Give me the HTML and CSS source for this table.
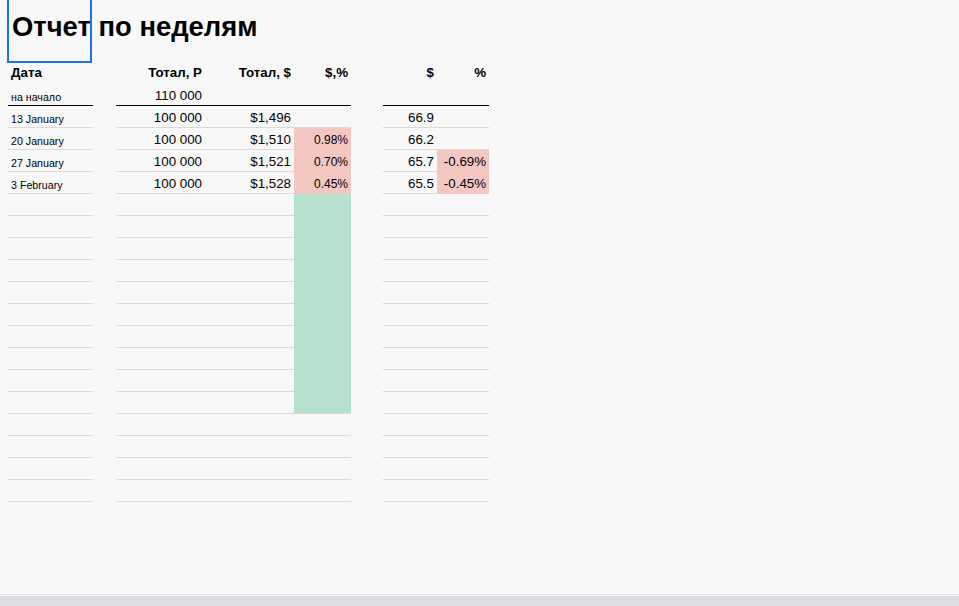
FILE: index.html
```html
<!DOCTYPE html>
<html lang="ru">
<head>
<meta charset="utf-8">
<title>Отчет по неделям</title>
<link rel="stylesheet" href="styles.css">
</head>
<body>
<main class="sheet">
  <table class="grid">
    <colgroup>
      <col class="c-date">
      <col class="c-gap1">
      <col class="c-rub">
      <col class="c-usd">
      <col class="c-pct">
      <col class="c-gap2">
      <col class="c-rate">
      <col class="c-rpct">
    </colgroup>
    <tbody>
      <tr class="r-title">
        <td class="title" colspan="8"><span class="sel"></span>Отчет по неделям</td>
      </tr>
      <tr class="r-head">
        <td class="l">Дата</td><td class="sp"></td><td>Тотал, Р</td><td>Тотал, $</td><td>$,%</td><td class="sp"></td><td>$</td><td>%</td>
      </tr>
      <tr class="r-start">
        <td class="l small">на начало</td><td class="sp"></td><td>110 000</td><td></td><td></td><td class="sp"></td><td></td><td></td>
      </tr>
      <tr>
        <td class="l small">13 January</td><td class="sp"></td><td>100 000</td><td>$1,496</td><td class="mid"></td><td class="sp"></td><td>66.9</td><td></td>
      </tr>
      <tr>
        <td class="l small">20 January</td><td class="sp"></td><td>100 000</td><td>$1,510</td><td class="mid pink">0.98%</td><td class="sp"></td><td>66.2</td><td></td>
      </tr>
      <tr>
        <td class="l small">27 January</td><td class="sp"></td><td>100 000</td><td>$1,521</td><td class="mid pink">0.70%</td><td class="sp"></td><td>65.7</td><td class="pink">-0.69%</td>
      </tr>
      <tr>
        <td class="l small">3 February</td><td class="sp"></td><td>100 000</td><td>$1,528</td><td class="mid pink">0.45%</td><td class="sp"></td><td>65.5</td><td class="pink">-0.45%</td>
      </tr>
      <tr><td></td><td class="sp"></td><td></td><td></td><td class="green"></td><td class="sp"></td><td></td><td></td></tr>
      <tr><td></td><td class="sp"></td><td></td><td></td><td class="green"></td><td class="sp"></td><td></td><td></td></tr>
      <tr><td></td><td class="sp"></td><td></td><td></td><td class="green"></td><td class="sp"></td><td></td><td></td></tr>
      <tr><td></td><td class="sp"></td><td></td><td></td><td class="green"></td><td class="sp"></td><td></td><td></td></tr>
      <tr><td></td><td class="sp"></td><td></td><td></td><td class="green"></td><td class="sp"></td><td></td><td></td></tr>
      <tr><td></td><td class="sp"></td><td></td><td></td><td class="green"></td><td class="sp"></td><td></td><td></td></tr>
      <tr><td></td><td class="sp"></td><td></td><td></td><td class="green"></td><td class="sp"></td><td></td><td></td></tr>
      <tr><td></td><td class="sp"></td><td></td><td></td><td class="green"></td><td class="sp"></td><td></td><td></td></tr>
      <tr><td></td><td class="sp"></td><td></td><td></td><td class="green"></td><td class="sp"></td><td></td><td></td></tr>
      <tr><td></td><td class="sp"></td><td></td><td></td><td class="green last"></td><td class="sp"></td><td></td><td></td></tr>
      <tr><td></td><td class="sp"></td><td></td><td></td><td></td><td class="sp"></td><td></td><td></td></tr>
      <tr><td></td><td class="sp"></td><td></td><td></td><td></td><td class="sp"></td><td></td><td></td></tr>
      <tr><td></td><td class="sp"></td><td></td><td></td><td></td><td class="sp"></td><td></td><td></td></tr>
      <tr><td></td><td class="sp"></td><td></td><td></td><td></td><td class="sp"></td><td></td><td></td></tr>
    </tbody>
  </table>
</main>
<footer class="footer"><div class="footer-bar"></div></footer>
</body>
</html>
```

FILE: styles.css
```css
html, body {
  margin: 0;
  height: 100%;
}

body {
  background: #f8f8f8;
  color: #000;
  font-family: "Liberation Sans", Arial, sans-serif;
  display: flex;
  flex-direction: column;
  overflow: hidden;
}

.sheet {
  flex: 1;
  padding-left: 8px;
}

.grid {
  border-collapse: separate;
  border-spacing: 0;
  table-layout: fixed;
  width: 481px;
}

.c-date { width: 85px; }
.c-gap1 { width: 23px; }
.c-rub { width: 89px; }
.c-usd { width: 89px; }
.c-pct { width: 57px; }
.c-gap2 { width: 32px; }
.c-rate { width: 54px; }
.c-rpct { width: 52px; }

.grid td {
  box-sizing: border-box;
  height: 22px;
  padding: 0 3px 2px;
  vertical-align: bottom;
  text-align: right;
  white-space: nowrap;
  overflow: hidden;
  font-size: 10pt;
  line-height: normal;
  border-bottom: 1px solid #dadada;
}

.grid td.l { text-align: left; }
.grid td.small { font-size: 8pt; }
.grid td.mid { font-size: 9pt; }
.grid td.sp { border-bottom: none; }

.grid td.pink {
  background: #f4c7c3;
  border-bottom-color: #f4c7c3;
}

.grid td.green {
  background: #b7e1cd;
  border-bottom-color: #b7e1cd;
}

.grid td.green.last { border-bottom-color: #dadada; }

.r-title td.title {
  position: relative;
  height: 62px;
  padding: 11px 0 0 4px;
  vertical-align: top;
  text-align: left;
  border-bottom: none;
  overflow: visible;
  font-size: 27.4px;
  font-weight: bold;
}

.sel {
  position: absolute;
  left: -1px;
  top: -4px;
  bottom: -1px;
  width: 85px;
  box-sizing: border-box;
  border: 2px solid #1a73e8;
  pointer-events: none;
}

.r-head td {
  height: 21px;
  padding-bottom: 3px;
  border-bottom: none;
  font-weight: bold;
}

.r-start td {
  height: 23px;
  border-bottom: 1px solid #000;
}

.r-start td.sp { border-bottom: none; }

.footer {
  flex: none;
  border-top: 1px solid #e2e2e2;
  padding-top: 1px;
}

.footer-bar {
  height: 10px;
  background: #dcdde1;
}
```
